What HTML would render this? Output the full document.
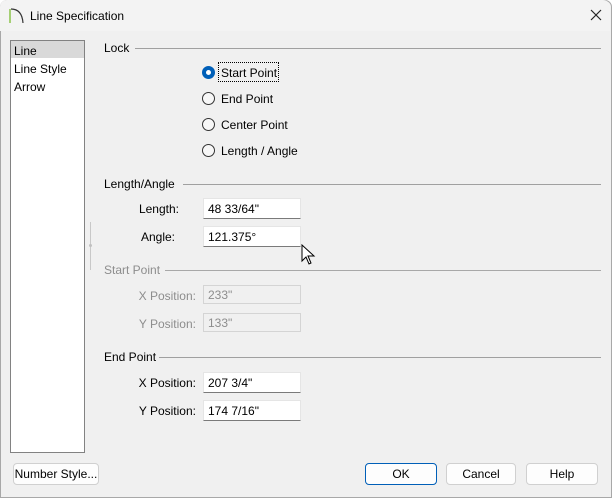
<!DOCTYPE html>
<html><head><style>
*{margin:0;padding:0;box-sizing:border-box}
body{width:612px;height:498px;background:#fff;font-family:"Liberation Sans",sans-serif;font-size:12px;color:#000;position:relative;overflow:hidden}
.win{position:absolute;left:0;top:0;width:612px;height:498px;background:#f0f0f0;border:1px solid #a8a8a8;border-radius:7px 7px 0 0}
.title{position:absolute;left:0;top:0;width:610px;height:31px;background:#f3f3f3;border-radius:7px 7px 0 0}
.a{position:absolute;white-space:nowrap;line-height:14px}
.line{position:absolute;height:1px;background:#a0a0a0}
.inp{position:absolute;width:98px;height:21px;background:#fff;border:1px solid #e5e5e5;border-bottom:1px solid #7a7a7a;padding:3px 0 0 4px;line-height:14px}
.dis{background:#f0f0f0;border:1px solid #d4d4d4;color:#8d8d8d}
.r{position:absolute;width:13px;height:13px;border-radius:50%;border:1px solid #333;background:#f7f7f7}
.btn{position:absolute;height:22px;background:#fdfdfd;border:1px solid #d0d0d0;border-radius:4px;text-align:center;line-height:20px}
.lbl{text-align:right;width:120px}
.g{color:#8d8d8d}
</style></head><body>
<div class="win"></div>
<div class="title"></div>
<svg style="position:absolute;left:8px;top:6px" width="18" height="18"><path d="M2 17 V3" stroke="#8bc34a" stroke-width="1.5"/><path d="M3 3 Q14 3 15 17" stroke="#333" fill="none" stroke-width="1.2"/></svg>
<div class="a" style="left:30px;top:9px">Line Specification</div>
<svg style="position:absolute;left:590px;top:9px" width="12" height="12"><path d="M1 1L11 11M11 1L1 11" stroke="#222" stroke-width="1.2"/></svg>

<div style="position:absolute;left:10px;top:40px;width:75px;height:413px;background:#fff;border:1px solid #828282"></div>
<div style="position:absolute;left:11px;top:41px;width:73px;height:17px;background:#d9d9d9"></div>
<div class="a" style="left:14px;top:44px">Line</div>
<div class="a" style="left:14px;top:62px">Line Style</div>
<div class="a" style="left:14px;top:80px">Arrow</div>
<div style="position:absolute;left:90px;top:222px;width:1px;height:48px;background:#c8c8c8"></div>
<div style="position:absolute;left:89px;top:244px;width:3px;height:3px;background:#c0c0c0;border-radius:50%"></div>

<div class="a" style="left:104px;top:41px">Lock</div>
<div class="line" style="left:135px;top:48px;width:466px"></div>
<div class="r" style="left:202px;top:66px;border:4px solid #005fb8;background:#fff"></div>
<div style="position:absolute;left:218px;top:62px;width:61px;height:20px;border:1px dotted #000"></div>
<div class="a" style="left:221px;top:66px">Start Point</div>
<div class="r" style="left:202px;top:92px"></div><div class="a" style="left:221px;top:92px">End Point</div>
<div class="r" style="left:202px;top:118px"></div><div class="a" style="left:221px;top:118px">Center Point</div>
<div class="r" style="left:202px;top:144px"></div><div class="a" style="left:221px;top:144px">Length / Angle</div>

<div class="a" style="left:104px;top:177px">Length/Angle</div>
<div class="line" style="left:183px;top:184px;width:418px"></div>
<div class="a lbl" style="left:59px;top:202px">Length:</div>
<div class="inp" style="left:203px;top:198px">48 33/64"</div>
<div class="a lbl" style="left:55px;top:230px">Angle:</div>
<div class="inp" style="left:203px;top:226px">121.375°</div>

<div class="a g" style="left:104px;top:263px">Start Point</div>
<div class="line" style="left:165px;top:270px;width:436px;background:#a8a8a8"></div>
<div class="a lbl g" style="left:76px;top:289px">X Position:</div>
<div class="inp dis" style="left:203px;top:285px;height:19px;padding-top:2px">233"</div>
<div class="a lbl g" style="left:76px;top:317px">Y Position:</div>
<div class="inp dis" style="left:203px;top:313px;height:19px;padding-top:2px">133"</div>

<div class="a" style="left:104px;top:350px">End Point</div>
<div class="line" style="left:159px;top:357px;width:442px"></div>
<div class="a lbl" style="left:76px;top:376px">X Position:</div>
<div class="inp" style="left:203px;top:372px">207 3/4"</div>
<div class="a lbl" style="left:76px;top:404px">Y Position:</div>
<div class="inp" style="left:203px;top:400px">174 7/16"</div>

<div class="btn" style="left:13px;top:463px;width:86px">Number Style...</div>
<div class="btn" style="left:365px;top:463px;width:72px;border:1px solid #005fb8">OK</div>
<div class="btn" style="left:446px;top:463px;width:70px">Cancel</div>
<div class="btn" style="left:526px;top:463px;width:72px">Help</div>

<svg style="position:absolute;left:301px;top:244px" width="16" height="24"><path d="M1 1 L1 17 L5 13 L8 20 L10 19 L7 12 L13 12 Z" fill="#fff" stroke="#000" stroke-width="1"/></svg>
</body></html>
